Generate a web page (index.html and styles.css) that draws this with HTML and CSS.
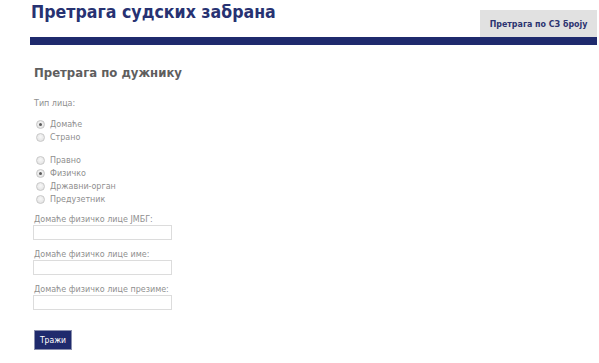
FILE: index.html
```html
<!DOCTYPE html>
<html lang="sr">
<head>
<meta charset="utf-8">
<title>Претрага судских забрана</title>
<link rel="stylesheet" href="styles.css">
</head>
<body>
<div class="page">
  <div class="header">
    <h1 class="title">Претрага судских забрана</h1>
    <div class="tab">Претрага по СЗ броју</div>
  </div>
  <div class="bar"></div>
  <div class="content">
    <h2 class="subtitle">Претрага по дужнику</h2>
    <div class="small">Тип лица:</div>
    <div class="group group-first">
      <label class="radio-row"><input type="radio" name="t1" checked><span>Домаће</span></label>
      <label class="radio-row"><input type="radio" name="t1"><span>Страно</span></label>
    </div>
    <div class="group">
      <label class="radio-row"><input type="radio" name="t2"><span>Правно</span></label>
      <label class="radio-row"><input type="radio" name="t2" checked><span>Физичко</span></label>
      <label class="radio-row"><input type="radio" name="t2"><span>Државни-орган</span></label>
      <label class="radio-row"><input type="radio" name="t2"><span>Предузетник</span></label>
    </div>
    <div class="field field-first">
      <div class="small field-label">Домаће физичко лице ЈМБГ:</div>
      <input class="text-input" type="text">
    </div>
    <div class="field">
      <div class="small field-label">Домаће физичко лице име:</div>
      <input class="text-input" type="text">
    </div>
    <div class="field">
      <div class="small field-label">Домаће физичко лице презиме:</div>
      <input class="text-input" type="text">
    </div>
    <button class="btn" type="button">Тражи</button>
  </div>
</div>
</body>
</html>
```
FILE: styles.css
```css
html, body {
  margin: 0;
  padding: 0;
  background: #ffffff;
  font-family: "DejaVu Sans", Verdana, sans-serif;
}
.page {
  padding: 0 2px 0 30px;
}
.header {
  display: flex;
  justify-content: space-between;
  align-items: flex-end;
  height: 37px;
}
.title {
  align-self: flex-start;
  margin: 1px 0 0 1px;
  font-family: "DejaVu Sans Condensed", "DejaVu Sans", sans-serif;
  font-size: 17.6px;
  line-height: 22px;
  font-weight: bold;
  color: #273272;
}
.tab {
  width: 117px;
  height: 27px;
  background: #e1e1e1;
  color: #2c3470;
  font-family: "DejaVu Sans Condensed", "DejaVu Sans", sans-serif;
  font-size: 8.8px;
  font-weight: bold;
  display: flex;
  align-items: center;
  justify-content: center;
}
.bar {
  height: 8px;
  background: #1f2a6d;
}
.content {
  padding-left: 3px;
}
.subtitle {
  margin: 20px 0 0 1px;
  font-family: "DejaVu Sans Condensed", "DejaVu Sans", sans-serif;
  font-size: 13px;
  line-height: 16px;
  font-weight: bold;
  color: #5e5e5e;
}
.small {
  font-size: 8px;
  line-height: 12px;
  color: #8f8f8f;
  padding-left: 1px;
}
.subtitle + .small {
  margin-top: 17px;
}
.group {
  display: flex;
  flex-direction: column;
  margin-top: 10px;
}
.group-first {
  margin-top: 8px;
}
.radio-row {
  display: flex;
  align-items: center;
  gap: 5px;
  height: 13px;
  font-size: 8px;
  color: #8f8f8f;
}
.radio-row input {
  appearance: none;
  -webkit-appearance: none;
  width: 9px;
  height: 9px;
  margin: 0 0 0 3px;
  border: 1px solid #c8c8c8;
  border-radius: 50%;
  background: radial-gradient(circle at 50% 40%, #f8f8f8, #dedede);
  box-sizing: border-box;
  position: relative;
}
.radio-row input:checked::after {
  content: "";
  position: absolute;
  left: 2px;
  top: 2px;
  width: 3px;
  height: 3px;
  border-radius: 50%;
  background: #5a5a5a;
}
.field {
  margin-top: 9px;
  display: flex;
  flex-direction: column;
  align-items: flex-start;
}
.field-first {
  margin-top: 8px;
}
.field-label {
  line-height: 12px;
  margin-bottom: -1px;
}
.text-input {
  width: 139px;
  height: 15px;
  box-sizing: border-box;
  margin: 0;
  padding: 0 2px;
  border: 1px solid #dcdcdc;
  background: #fff;
  font-size: 8px;
}
.btn {
  display: block;
  margin: 20px 0 0 1px;
  width: 38px;
  height: 20px;
  padding: 0;
  background: #1f2a6d;
  border: 1px solid #8a8fae;
  color: #ffffff;
  font-family: "DejaVu Sans Condensed", "DejaVu Sans", sans-serif;
  font-size: 8.5px;
}
```
